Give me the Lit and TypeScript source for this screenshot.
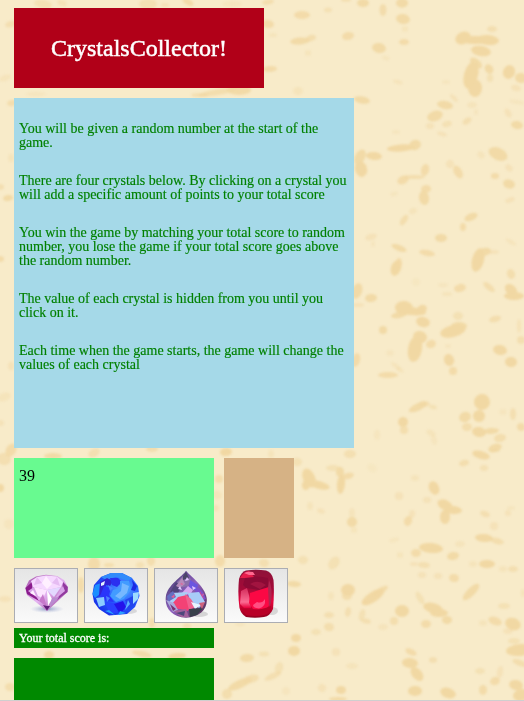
import { LitElement, html, svg, css } from "lit";
import { customElement } from "lit/decorators.js";

// Parchment blotches: cx, cy, rx, ry, rotation, opacity
const blotches: number[][] = [
  [43, 4, 9, 4, 10, 0.6], [62, 3, 5, 3, 20, 0.5], [148, 4, 9, 5, 0, 0.6], [165, 5, 4, 2, 0, 0.5], [188, 2, 6, 3, 30, 0.9], [232, 4, 10, 3, 0, 0.3],
  [268, 2, 6, 2.5, -10, 0.8], [346, 0, 5, 1.5, 0, 0.8], [363, 3, 6, 4, 0, 1], [402, 3, 6, 4.5, 0, 1], [383, 10, 3.5, 6, 0, 0.85],
  [268, 24, 6, 4, 10, 0.9], [302, 15, 8, 4, 0, 0.9], [328, 10, 4, 2.5, 0, 0.6], [403, 19, 7, 5, 10, 1], [405, 29, 3, 3, 0, 0.4],
  [300, 41, 10, 3.5, -5, 1], [311, 38, 5, 3, -15, 0.8], [348, 36, 6, 4, -10, 0.9], [273, 35, 4, 2, 0, 0.4], [404, 42, 5, 3, 0, 0.9],
  [379, 48, 7, 5, 10, 1], [386, 58, 4, 2, 20, 0.3], [308, 53, 3, 3, 0, 0.4], [270, 69, 7, 3, -5, 0.9], [298, 91, 5, 4, 0, 0.4], [398, 82, 5, 2, 15, 0.4],
  [463, 38, 8, 6, -25, 1.2], [475, 40, 15, 4, 0, 1.2], [488, 40, 11, 5, 5, 1.2], [481, 51, 10, 5, 10, 1.1], [492, 29, 5, 3, 0, 0.7],
  [471, 75, 7, 14, 15, 1.2], [476, 63, 7, 4, 40, 1], [475, 88, 7, 9, 0, 1.1], [489, 69, 4, 5, -35, 1], [490, 78, 3, 4, 0, 0.6],
  [509, 72, 6, 7, 20, 1.1], [521, 78, 6, 5, 10, 1], [516, 88, 5, 3, 15, 0.5], [446, 82, 4, 2, 0, 0.3],
  [362, 100, 8, 3.5, 10, 1], [445, 105, 8, 4, 10, 1], [435, 116, 8, 5, -20, 1], [430, 126, 4, 3, 0, 0.5], [447, 124, 5, 3, -15, 0.6], [442, 134, 5, 2, 15, 0.5],
  [467, 121, 5, 3, -35, 0.7], [454, 98, 5, 2, 45, 0.5], [472, 105, 5, 3, 0, 0.4], [476, 112, 2, 3, 0, 0.3], [517, 125, 6, 4, 10, 1], [508, 113, 3, 5, -30, 0.5], [517, 102, 8, 2, 10, 0.3], [396, 132, 4, 2, 0, 0.3],
  [401, 148, 14, 3.5, -4, 1.1], [415, 145, 6, 5, -20, 1], [360, 157, 5, 8, 30, 1], [374, 156, 8, 4, 5, 1.1], [361, 169, 6, 8, -15, 1.1],
  [425, 170, 4, 6, 15, 0.9], [403, 180, 6, 4, -25, 0.9], [414, 177, 11, 2, 0, 0.8], [426, 189, 5, 4, -5, 0.9], [424, 198, 5, 7, -10, 1],
  [481, 155, 4, 3, 40, 0.4], [498, 154, 10, 6, 25, 1], [509, 168, 4, 3, 40, 0.5], [458, 172, 4, 7, -30, 0.9], [450, 164, 4, 4, 40, 0.5], [495, 176, 4, 3, 0, 0.9], [509, 184, 6, 4.5, 15, 1], [510, 200, 5, 2.5, -20, 0.5],
  [394, 194, 4, 2, -20, 0.3], [413, 211, 4, 3, -25, 0.4], [404, 220, 3, 6, 35, 0.8], [471, 217, 7, 3.5, -25, 1], [463, 227, 3, 4, 0, 0.9],
  [371, 237, 6, 3, -15, 0.5], [373, 244, 2, 3, 0, 0.3], [441, 238, 6, 4, 0, 1],
  [399, 248, 8, 3, 22, 1], [427, 253, 8, 3, 10, 0.9], [396, 268, 5, 8, 20, 1.2], [399, 263, 3, 5, 0, 0.9], [511, 242, 6, 2, 30, 0.4],
  [478, 260, 6, 12, 15, 1.1], [484, 252, 7, 4, -15, 1], [493, 252, 6, 2, 0, 0.5], [511, 274, 4, 5, -20, 0.8], [511, 290, 7, 5, 45, 1.1], [514, 296, 10, 4, 0, 1.2],
  [357, 291, 5, 8, 20, 1], [371, 298, 6, 4, -5, 1], [358, 305, 6, 2, 0, 0.5], [460, 288, 6, 4, -15, 0.9], [443, 285, 5, 2, 0, 0.3], [447, 294, 5, 2, 0, 0.4], [489, 287, 7, 3, 40, 0.8], [416, 282, 4, 4, 0, 0.2],
  [404, 308, 9, 7, 5, 1.3], [411, 311, 15, 4, 7, 1.2], [422, 309, 5, 4, -20, 1.1], [423, 322, 7, 5, 15, 1.1], [399, 315, 8, 3, -10, 1],
  [383, 330, 4, 4, 0, 1], [453, 331, 13, 6, -15, 1.3], [459, 326, 8, 4, 0, 1], [458, 316, 5, 4, 0, 0.6], [495, 319, 6, 3, -15, 0.8], [519, 326, 2, 7, 0, 0.5],
  [420, 337, 7, 6, 15, 1.1], [415, 349, 7, 13, 10, 1.3], [431, 344, 5, 4, -20, 0.9], [500, 350, 7, 5, 10, 1.1], [521, 340, 4, 4, 0, 0.7], [448, 346, 3, 2, 0, 0.3], [390, 353, 4, 3, 0, 0.3],
  [449, 360, 5, 6, -20, 1.1], [453, 371, 4, 4, 0, 0.9], [511, 362, 6, 5, 5, 1.1], [356, 360, 4, 7, 15, 0.9], [388, 375, 10, 3, 0, 0.9], [396, 366, 6, 2, 35, 0.4], [400, 370, 4, 2, 30, 0.4],
  [418, 407, 10, 3.5, -25, 1], [424, 404, 6, 3, 0, 0.7], [433, 407, 4, 2, 15, 0.6], [482, 402, 8, 8, 10, 1.2], [479, 416, 6, 6, 0, 1.2], [465, 417, 6, 5, -20, 1],
  [403, 422, 5, 5, 0, 1.1], [404, 430, 4, 4, 0, 0.8], [467, 427, 5, 4, 0, 0.8], [479, 432, 7, 5, 10, 1.1], [491, 431, 8, 3, -5, 1], [500, 438, 6, 4, -10, 0.8], [495, 448, 7, 4, -20, 1], [513, 414, 3, 6, 0, 0.7], [521, 427, 4, 4, -20, 0.9], [503, 412, 4, 3, 0, 0.3], [431, 433, 5, 3, 30, 0.4], [434, 440, 3, 5, -15, 0.3], [377, 435, 3, 5, 0, 0.3],
  [481, 455, 9, 4, 15, 1.1], [350, 454, 6, 4, 0, 0.7], [297, 462, 5, 4, 0, 0.6], [464, 463, 5, 3, -15, 0.8], [484, 468, 4, 3, 0, 0.6], [495, 450, 5, 2, 0, 0.6], [372, 468, 5, 4, 30, 0.2],
  [309, 478, 6, 10, -25, 1.2], [306, 485, 4, 5, 10, 1.1], [319, 485, 11, 4, 15, 1.2], [333, 468, 7, 3, 0, 0.6], [340, 472, 4, 5, 0, 1], [341, 484, 4, 10, 5, 1.2], [348, 476, 6, 3, -15, 0.9],
  [415, 478, 4, 3, 0, 0.4], [434, 488, 5, 7, -25, 1.1], [399, 496, 4, 4, 0, 0.5], [427, 500, 4, 3, 0, 0.5], [445, 505, 8, 5, 25, 1.2], [453, 510, 9, 4, 5, 1.2], [445, 517, 5, 7, 0, 1.1],
  [310, 506, 3, 4, 0, 0.4], [321, 511, 4, 2.5, 20, 0.5], [352, 522, 5, 5, 0, 1], [352, 513, 3, 5, 0, 0.4], [354, 530, 3, 3, 0, 0.4], [408, 521, 4, 5, 20, 0.9], [412, 514, 3, 4, 10, 0.5],
  [485, 514, 5, 3, 20, 0.7], [508, 513, 3, 3, -25, 0.5], [511, 508, 4, 2, 0, 0.3], [494, 526, 4, 4, 10, 0.5], [484, 538, 9, 4, 5, 1.1], [497, 541, 7, 3, 15, 0.8], [394, 540, 5, 2, -15, 0.3], [460, 544, 5, 3, 0, 0.4],
  [431, 548, 12, 5, 5, 1.2], [416, 553, 5, 4, 0, 0.9], [453, 556, 6, 4, -10, 1], [487, 564, 8, 4, 0, 1.1], [424, 565, 6, 3, 5, 0.7], [414, 564, 4, 2, 0, 0.5], [400, 555, 3, 3, 0, 0.4], [303, 560, 5, 4, 0, 0.6],
  [334, 563, 5, 7, 35, 0.6], [422, 575, 4, 3, 0, 0.5], [438, 576, 4, 3, 0, 0.5], [454, 578, 5, 4, 10, 0.9], [473, 564, 4, 3, 0, 0.4], [503, 569, 4, 3, 0, 0.4], [513, 569, 5, 3, 0, 0.7],
  [294, 584, 7, 3, 5, 1], [348, 590, 7, 6, 0, 1.1], [347, 596, 5, 4, 0, 0.8], [373, 597, 13, 5, -33, 1.1], [380, 591, 9, 3, -30, 0.9], [366, 602, 4, 3, 0, 0.9], [471, 592, 11, 4, -45, 1], [420, 598, 3, 7, -30, 0.6],
  [331, 596, 3, 4, 0, 0.4], [329, 615, 5, 3, 0, 0.7], [348, 612, 3, 5, 10, 0.7], [362, 615, 3, 6, 15, 0.6], [366, 621, 5, 2.5, 15, 0.7], [402, 611, 7, 6, 0, 1.2], [394, 621, 4, 4, 0, 0.8],
  [433, 608, 10, 5, 15, 1.2], [439, 613, 9, 4, 0, 1.1], [447, 620, 5, 4, 0, 1], [426, 624, 5, 4, 0, 0.9], [329, 627, 5, 4, 10, 0.8], [316, 632, 5, 3, 0, 0.6], [383, 627, 5, 3, 0, 0.4],
  [504, 606, 6, 3, 0, 0.6], [495, 621, 7, 4, 20, 0.9], [513, 624, 8, 6, 20, 1.2], [483, 623, 4, 3, 0, 0.4], [508, 631, 5, 3, 0, 0.5], [523, 593, 2, 4, 0, 0.4],
  [296, 638, 5, 4, 0, 1.1], [294, 651, 6, 5, 0, 1.2], [336, 652, 4, 4, 0, 0.5], [411, 652, 6, 3, 25, 0.9], [410, 663, 8, 5, 5, 1.2], [417, 674, 5, 8, -40, 1.2], [433, 660, 4, 3, 0, 0.7], [352, 666, 6, 3, 0, 0.4],
  [514, 641, 6, 3, 0, 0.6], [520, 650, 14, 6, -5, 1.3], [520, 663, 8, 3, 20, 0.8], [480, 671, 5, 3, 0, 0.6], [495, 681, 5, 4, -20, 0.9], [500, 672, 3, 6, 10, 0.5], [483, 690, 4, 5, 0, 0.9], [516, 685, 7, 5, 10, 1.1], [521, 695, 8, 6, -15, 1.3],
  [341, 690, 5, 4, 0, 1.1], [322, 688, 4, 4, 35, 0.5], [338, 699, 9, 2, 0, 1], [415, 691, 7, 5, 0, 1.2], [448, 693, 8, 5, 20, 1.2],
  [11, 24, 6, 3, -15, 0.7], [5, 78, 6, 3, -20, 0.4], [36, 94, 10, 2, 0, 0.3], [218, 92, 20, 3, -10, 0.8], [239, 90, 12, 5, 0, 1], [200, 95, 9, 2, 0, 0.7],
  [12, 103, 5, 3, -10, 0.8], [11, 158, 3, 4, 0, 0.4], [0, 187, 4, 3, 0, 0.7], [8, 198, 5, 3, -10, 1], [0, 259, 4, 3, 0, 0.9],
  [11, 366, 3, 4, 0, 0.5], [4, 397, 7, 4, -20, 0.4], [0, 423, 4, 3, 0, 0.5], [11, 450, 5, 7, 30, 0.9], [4, 459, 7, 6, 10, 0.7], [0, 488, 4, 4, 0, 1.1], [9, 524, 5, 5, 0, 0.3],
  [53, 456, 9, 3, 0, 1], [94, 453, 6, 4, -30, 0.7], [152, 449, 6, 3, 0, 0.8], [226, 452, 6, 4, -5, 1.2], [271, 454, 3, 4, 0, 0.4],
  [219, 479, 4, 4, 0, 0.8], [217, 495, 5, 4, 20, 0.4], [216, 508, 3, 3, 0, 0.5], [220, 561, 5, 6, 0, 0.9], [264, 563, 5, 4, 10, 0.7],
  [94, 564, 6, 7, 0, 0.9], [109, 565, 5, 2, 0, 0.8], [151, 561, 4, 5, 0, 0.8], [140, 565, 4, 3, 0, 0.6], [81, 585, 3, 8, 0, 0.9],
  [5, 599, 6, 3, 0, 0.5], [152, 623, 3, 5, 0, 0.8], [187, 626, 4, 3, 0, 0.6], [49, 655, 5, 4, 0, 1], [142, 654, 10, 3, 12, 0.9], [177, 656, 9, 3, -5, 1.1],
  [10, 687, 5, 4, 0, 0.8], [247, 658, 7, 4, -5, 1], [264, 654, 5, 2.5, 0, 0.6], [240, 684, 13, 4, -25, 1], [251, 679, 8, 4, -15, 0.8], [227, 694, 5, 5, 0, 0.8], [273, 676, 9, 3, -25, 0.7], [279, 668, 4, 6, 15, 0.6], [240, 624, 5, 2, 0, 0.3], [286, 691, 4, 4, 0, 0.3],
];

const instructions = [
  "You will be given a random number at the start of the game.",
  "There are four crystals below. By clicking on a crystal you will add a specific amount of points to your total score",
  "You win the game by matching your total score to random number, you lose the game if your total score goes above the random number.",
  "The value of each crystal is hidden from you until you click on it.",
  "Each time when the game starts, the game will change the values of each crystal",
];

const amethyst = svg`
  <defs>
    <linearGradient id="am" x1="0" y1="0" x2="1" y2="1"><stop offset="0" stop-color="#a04aa5"/><stop offset=".5" stop-color="#e6b5f3"/><stop offset="1" stop-color="#8e358f"/></linearGradient>
    <radialGradient id="shade"><stop offset="0" stop-color="#5368a5" stop-opacity=".65"/><stop offset="1" stop-color="#aab5dc" stop-opacity="0"/></radialGradient>
  </defs>
  <ellipse cx="33" cy="41" rx="17" ry="4" fill="url(#shade)"/>
  <path d="M11.3 20 15 12.5 22 8.5 32 6.8 43 8 50 12 53.8 19 53.5 24 33 43 13 27Z" fill="url(#am)"/>
  <path d="M11.5 20 18 14 18 22 25 33 13 26Z" fill="#8b1c8d"/><path d="M53.8 19 49 14 48 22 43 32 53.5 24Z" fill="#923a9f"/>
  <path d="M17 13 23 9 32 7.5 43 8.5 49 14 47 19 33 22 19 19Z" fill="#f6d9ff"/>
  <path d="M23 9 28 15 20 17ZM43 9 38 15 46 18Z" fill="#e6bcf2"/>
  <path d="M28 15 32 8 38 16 33 21Z" fill="#fff0ff"/>
  <path d="M14 23 20 19 25 31ZM49 18 51 23 40 32Z" fill="#d9a4e8"/>
  <path d="M20 19 33 22 29 30 24 28Z" fill="#fce5ff"/><path d="M33 22 47 19 40 29Z" fill="#e3d8ff"/>
  <path d="M29 26 33 39 25 33Z" fill="#c678ca"/><path d="M33 22 38 31 34 38Z" fill="#fff"/>
  <path d="M38 30 45 29 35 40Z" fill="#b98bd0"/><path d="M29 37 33 42.5 36 38 33 38Z" fill="#601c78"/>
  <path d="M16 25 19 22 22 28Z" fill="#fff1ff"/>`;

const sapphire = svg`
  <defs><radialGradient id="sa" cx=".65" cy=".38" r=".7"><stop offset="0" stop-color="#58a7ff"/><stop offset=".5" stop-color="#285dff"/><stop offset="1" stop-color="#1730e7"/></radialGradient></defs>
  <ellipse cx="44" cy="43" rx="9" ry="3" fill="#b3b3b7" opacity=".45"/>
  <path d="M8.5 26 10 17 17 9 27 5 38 5 48 10 54 18 55.5 28 51 39 43 46 25 47.5 15 41 10 34Z" fill="url(#sa)"/>
  <path d="M17 9 27 5 38 5 48 10 44 13 32 9 22 12Z" fill="#318bfa"/>
  <path d="M8.5 26 11 17 18 15 17 25 11 30Z" fill="#1b8fff"/>
  <path d="M16 14 23 10 29 13 26 18 22 17 20 25 15 28Z" fill="#3222d5"/>
  <path d="M26 10 34 10 38 14 33 19 28 17Z" fill="#2b2ff0"/>
  <path d="M36 13 45 13 47 22 40 31 32 34 26 28 29 22 36 20Z" fill="#429bff"/>
  <path d="M38 15 45 18 43 25 36 31 31 28 37 23Z" fill="#83bfff" opacity=".8"/>
  <path d="M20 18 27 20 25 27 30 34 21 33 16 28Z" fill="#2a35fa"/>
  <path d="M12 30 20 29 21 37 15 39Z" fill="#8acbff"/>
  <path d="M21 34 31 35 34 45 25 45Z" fill="#2942ff"/><path d="M30 36 39 33 42 39 36 46Z" fill="#2413ea"/>
  <path d="M41 32 49 28 51 37 44 42Z" fill="#2446ee"/><path d="M49 25 55 24 54 31 49 36Z" fill="#9ddcff"/>
  <path d="M48 12 53 18 51 23 47 22 49 17Z" fill="#1d29e4"/><path d="M44 32 46 36 41 42Z" fill="#5dadff"/>
  <path d="M17 15 21 13 20 17 17 18Z" fill="#e6f5ff"/><path d="M25 42 31 47 21 43ZM36 43 42 45 34 47Z" fill="#29a0ff"/>
  <path d="M24 17 29 20 26 23ZM22 28 26 30 23 34Z" fill="#4c81ff"/>`;

const opal = svg`
  <defs><linearGradient id="op" x1="0" y1="0" x2="1" y2="1"><stop offset="0" stop-color="#3b3764"/><stop offset=".5" stop-color="#9061c0"/><stop offset="1" stop-color="#4e2a48"/></linearGradient></defs>
  <ellipse cx="45" cy="46" rx="9" ry="3" fill="#aaa" opacity=".45"/>
  <path d="M32 2.7C29 8 13 17 11.8 29C10.5 40 18 49 32 49.7C46 49 54 41 52.7 30C51 18 36 8 32 2.7Z" fill="url(#op)"/>
  <path d="M31 6 37 11 34 18 26 20 22 15Z" fill="#8c72ab"/><path d="M32 4 35 10 29 12 29 8Z" fill="#4b4668"/>
  <path d="M36 12 44 17 43 23 35 20Z" fill="#6b55e0"/><path d="M22 14 28 18 24 25 16 24Z" fill="#51437c"/>
  <path d="M28 10 31 16 26 20 22 18Z" fill="#b68bba"/><path d="M34 18 39 22 36 27 28 25Z" fill="#d6a5ee"/>
  <path d="M43 18 49 24 52 31 45 34 40 27Z" fill="#7c50cc"/><path d="M46 23 50 30 46 32Z" fill="#c24b9a"/>
  <path d="M18 25 34 24 29 33 15 36Z" fill="#a9cdf5"/><path d="M13 28 19 23 22 29 14 34Z" fill="#666fc2"/>
  <path d="M34 25 45 24 51 34 45 40 36 34Z" fill="#a8cbf8"/><path d="M24 29 33 27 38 34 34 43 21 40 18 36Z" fill="#f34275"/>
  <path d="M31 26 37 31 42 39 35 42Z" fill="#f0608e"/><path d="M12 32 20 35 24 42 19 44Z" fill="#aaa8da"/>
  <path d="M16 36 22 41 19 43Z" fill="#7a3071"/><path d="M37 34 47 37 41 41Z" fill="#e8f3ff"/>
  <path d="M20 43 32 41 35 49 27 49Z" fill="#a2629d"/><path d="M35 41 49 40 43 47 36 49Z" fill="#38404b"/>
  <path d="M45 35 51 34 48 41Z" fill="#ce627c"/><path d="M22 45 31 43 30 48Z" fill="#4c487c"/>
  <path d="M33 9 35 12 31 13ZM24 21 26 18 28 22ZM38 18 42 20 39 22Z" fill="#e2c8ff"/>
  <path d="M26 16 28 15 29 17ZM17 29 21 26 20 30ZM49 25 50 27 48 28Z" fill="#e65f95"/>`;

const ruby = svg`
  <defs>
    <linearGradient id="ru" x1="0" y1="0" x2="0" y2="1"><stop offset="0" stop-color="#8e1239"/><stop offset=".4" stop-color="#a30a38"/><stop offset=".65" stop-color="#e8053e"/><stop offset="1" stop-color="#91001d"/></linearGradient>
    <linearGradient id="rl" x1="0" y1="0" x2="0" y2="1"><stop offset="0" stop-color="#d32c5b"/><stop offset=".7" stop-color="#fb6c93"/><stop offset="1" stop-color="#e6003a"/></linearGradient>
  </defs>
  <ellipse cx="48" cy="43" rx="6" ry="4" fill="#aaa" opacity=".4"/>
  <path d="M22 2.5Q32 1 42 2.5 48 4 49.5 12 50.5 25 49 41 46 48 40 49Q31 50.5 22 49 17 46 15.5 40 13.5 26 15 11 17 4 22 2.5Z" fill="url(#ru)"/>
  <path d="M21 10Q33 7 44 10L45 19 35 22 22 20 19 17Z" fill="#8b0a35"/>
  <path d="M16 10Q19 4 25 3L30 9 21 10Z" fill="#e71c4b"/><path d="M20 5Q24 3 29 4L31 7 25 7Z" fill="#ff6990"/>
  <path d="M17 23 23 20 26 31 27 40 20 40 16 36Z" fill="url(#rl)"/>
  <path d="M26 25 45 19 46 35Q44 41 39 42L29 41 25 35Z" fill="#fb0844"/>
  <path d="M33 34Q38 36 41 31Q42 39 35 40.5 29 40 29 37Z" fill="#ff4e82"/>
  <path d="M45 12Q49 20 47 35L45 39 44 20Z" fill="#b02550"/>
  <path d="M17 40Q30 45 47 38Q47 46 40 47 32 49 22 47Z" fill="#b90027"/>
  <path d="M26 16Q34 11 42 17L36 21Z" fill="#b21a47" opacity=".6"/>`;

const crystals = [amethyst, sapphire, opal, ruby];

@customElement("app-root")
export class AppRoot extends LitElement {
  static styles = css`
    :host { display: block; position: relative; box-sizing: border-box; height: 701px; overflow: hidden; background: #f8ebc9; font-family: "Liberation Serif", serif; border-bottom: 1px solid #cfcfcf; }
    .paper { position: absolute; left: 0; top: 0; width: 524px; height: 700px; display: block; }
    .blots { fill: #f1d8a3; filter: blur(1.3px); }
    .page { position: relative; display: flex; flex-direction: column; align-items: flex-start; padding: 8px 14px 0; }
    .title { box-sizing: border-box; width: 250px; height: 80px; margin: 0 0 10px; background: #b10018; color: #fff; font-size: 24px; font-weight: 400; line-height: 80px; text-align: center; white-space: nowrap; -webkit-text-stroke: 0.5px #fff; }
    .rules { box-sizing: border-box; width: 340px; height: 350px; padding: 24px 5px 0; background: #a5d9e8; color: #008000; font-size: 14px; line-height: 14px; -webkit-text-stroke: 0.15px #008000; }
    .rules p { margin: 0 0 24px; }
    .stats { display: flex; gap: 10px; margin: 10px 0; }
    .target { box-sizing: border-box; width: 200px; height: 100px; padding: 9px 5px; background: #68fa90; font-size: 16px; line-height: 18px; color: #000; }
    .result { width: 70px; height: 100px; background: #d6b285; }
    .crystals { display: flex; gap: 6px; }
    .crystal { box-sizing: border-box; width: 64px; height: 55px; padding: 0; border: 1px solid #abadb3; border-radius: 0; background: linear-gradient(#e5e5e5, #fafafa); display: block; overflow: hidden; }
    .crystal svg { display: block; width: 64px; height: 55px; margin: -1px; filter: blur(0.6px); }
    .label { box-sizing: border-box; width: 200px; height: 20px; margin: 5px 0 10px; padding: 0 5px; background: #008900; color: #fff; font-size: 12px; line-height: 20px; -webkit-text-stroke: 0.3px #fff; }
    .total { width: 200px; height: 100px; background: #008900; }
  `;

  render() {
    return html`
      <svg class="paper" viewBox="0 0 524 700" aria-hidden="true">
        <g class="blots">
          ${blotches.map(([x, y, rx, ry, r, o]) => svg`<ellipse cx=${x} cy=${y} rx=${rx} ry=${ry} opacity=${Math.min(1, o * 0.9)} transform=${`rotate(${r} ${x} ${y})`}/>`)}
        </g>
      </svg>
      <main class="page">
        <h1 class="title">CrystalsCollector!</h1>
        <section class="rules">${instructions.map((t) => html`<p>${t}</p>`)}</section>
        <div class="stats"><div class="target">39</div><div class="result"></div></div>
        <div class="crystals">
          ${crystals.map((c) => html`<button class="crystal"><svg viewBox="0 0 64 55">${c}</svg></button>`)}
        </div>
        <div class="label">Your total score is:</div>
        <div class="total"></div>
      </main>
    `;
  }
}
